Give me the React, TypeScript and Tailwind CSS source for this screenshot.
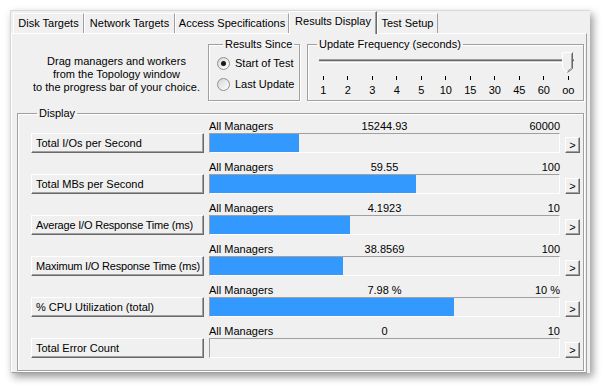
import React from "react";

type Row = { label: string; value: string; max: string; fill: number; tight?: boolean };

const rows: Row[] = [
  { label: "Total I/Os per Second", value: "15244.93", max: "60000", fill: 89 },
  { label: "Total MBs per Second", value: "59.55", max: "100", fill: 206 },
  { label: "Average I/O Response Time (ms)", value: "4.1923", max: "10", fill: 140, tight: true },
  { label: "Maximum I/O Response Time (ms)", value: "38.8569", max: "100", fill: 133, tight: true },
  { label: "% CPU Utilization (total)", value: "7.98 %", max: "10 %", fill: 244 },
  { label: "Total Error Count", value: "0", max: "10", fill: 0 },
];

const ticks = ["1", "2", "3", "4", "5", "10", "15", "30", "45", "60", "oo"];

const raised =
  "border border-t-white border-l-white border-r-[#696969] border-b-[#696969] shadow-[inset_-1px_-1px_0_#a0a0a0] bg-[#f0f0f0]";

const Tab = ({ label, width, active }: { label: string; width: string; active?: boolean }) => (
  <div
    className={
      active
        ? `${width} h-[23px] -mb-[1px] relative z-10 bg-[#f0f0f0] border-l border-t border-l-white border-t-white border-r border-r-[#696969] shadow-[inset_-1px_0_0_#a0a0a0] flex items-start pt-[3px] justify-center`
        : `${width} h-[20px] bg-[#f0f0f0] border-l border-t border-l-white border-t-white border-r border-r-[#a0a0a0] flex items-center justify-center`
    }
  >
    {label}
  </div>
);

const Radio = ({ label, checked }: { label: string; checked?: boolean }) => (
  <div className="flex items-center h-[21px] gap-[5px]">
    <div className="w-[13px] h-[13px] rounded-full border border-[#8e8f8f] bg-gradient-to-br from-[#d6d6d6] to-white flex items-center justify-center">
      {checked && <div className="w-[5px] h-[5px] rounded-full bg-[#1a1a1a]" />}
    </div>
    <span>{label}</span>
  </div>
);

export default function App() {
  return (
    <div className="w-[604px] h-[390px] bg-white pt-[10px] pl-[10px] text-[11px] leading-[13px] text-black" style={{ fontFamily: '"Liberation Sans", Arial, sans-serif' }}>
      <div className="w-[580px] h-[363px] bg-[#f0f0f0] border-l border-t border-[#d8d8d8] shadow-[3px_4px_8px_rgba(0,0,0,0.4)] flex flex-col">
        {/* tab strip */}
        <div className="h-[22px] flex items-end pl-[2px]">
          <Tab label="Disk Targets" width="w-[71px]" />
          <Tab label="Network Targets" width="w-[91px]" />
          <Tab label="Access Specifications" width="w-[114px]" />
          <Tab label="Results Display" width="w-[88px]" active />
          <Tab label="Test Setup" width="w-[61px]" />
        </div>

        {/* panel */}
        <div className="w-[576px] h-[340px] border border-t-white border-l-white border-r-[#a0a0a0] border-b-[#a0a0a0] pl-[5px] pt-[4px]">
          <div className="flex h-[63px]">
            <div className="w-[191px] pl-[8px] pt-[17px] text-center">
              <div>Drag managers and workers</div>
              <div>from the Topology window</div>
              <div>to the progress bar of your choice.</div>
            </div>

            <fieldset className="w-[92px] h-[63px] border border-[#a0a0a0] shadow-[inset_1px_1px_0_white,1px_1px_0_white] pl-[8px]">
              <legend className="ml-[6px] px-[2px]">Results Since</legend>
              <div className="pt-[2px]">
                <Radio label="Start of Test" checked />
                <Radio label="Last Update" />
              </div>
            </fieldset>

            <fieldset className="ml-[7px] w-[277px] h-[63px] border border-[#a0a0a0] shadow-[inset_1px_1px_0_white,1px_1px_0_white] pl-[3px]">
              <legend className="ml-[6px] px-[2px]">Update Frequency (seconds)</legend>
              <div className="relative h-[21px] ml-[8px] w-[255px]">
                <div className="absolute left-0 right-0 top-[8px] h-[4px] border-t border-t-[#a0a0a0] border-b border-b-white bg-[#d4d4d4] shadow-[inset_0_1px_0_#696969]" />
                <svg className="absolute right-[1px] top-[1px]" width="11" height="21" viewBox="0 0 11 21">
                  <path d="M0.5 0.5 H10.5 V16.5 L5.5 20.5 L0.5 16.5 Z" fill="#f0f0f0" stroke="#ffffff" />
                  <path d="M10.5 0.5 V16.5 L5.5 20.5" fill="none" stroke="#696969" />
                  <path d="M9.5 1.5 V16 L5.5 19.2" fill="none" stroke="#a0a0a0" />
                </svg>
              </div>
              <div className="grid grid-cols-11 w-[269.5px] pt-[4px]">
                {ticks.map((t) => (
                  <div key={t} className="flex flex-col items-center">
                    <div className="w-[1px] h-[4px] bg-black" />
                    <div className="mt-[4px]">{t}</div>
                  </div>
                ))}
              </div>
            </fieldset>
          </div>

          <fieldset className="mt-[6px] w-[567px] h-[264px] border border-[#a0a0a0] shadow-[inset_1px_1px_0_white,1px_1px_0_white] pl-[13px] pr-[3px]">
            <legend className="ml-[6px] px-[2px]">Display</legend>
            <div className="flex flex-col gap-[8px]">
              {rows.map((r) => (
                <div key={r.label} className="flex items-end h-[33px]">
                  <div className={`${raised} w-[173px] h-[20px] pl-[4px] flex items-center whitespace-nowrap ${r.tight ? "tracking-[-0.2px]" : ""}`}>{r.label}</div>
                  <div className="ml-[5px] w-[351px] flex flex-col">
                    <div className="grid grid-cols-3 h-[13px]">
                      <span>All Managers</span>
                      <span className="text-center">{r.value}</span>
                      <span className="text-right">{r.max}</span>
                    </div>
                    <div className="h-[20px] border border-t-[#a0a0a0] border-l-[#a0a0a0] border-r-white border-b-white">
                      <div className="h-full bg-[#3399ff]" style={{ width: r.fill }} />
                    </div>
                  </div>
                  <div className={`${raised} ml-[5px] w-[15px] h-[16px] flex items-center justify-center`}>&gt;</div>
                </div>
              ))}
            </div>
          </fieldset>
        </div>
      </div>
    </div>
  );
}
